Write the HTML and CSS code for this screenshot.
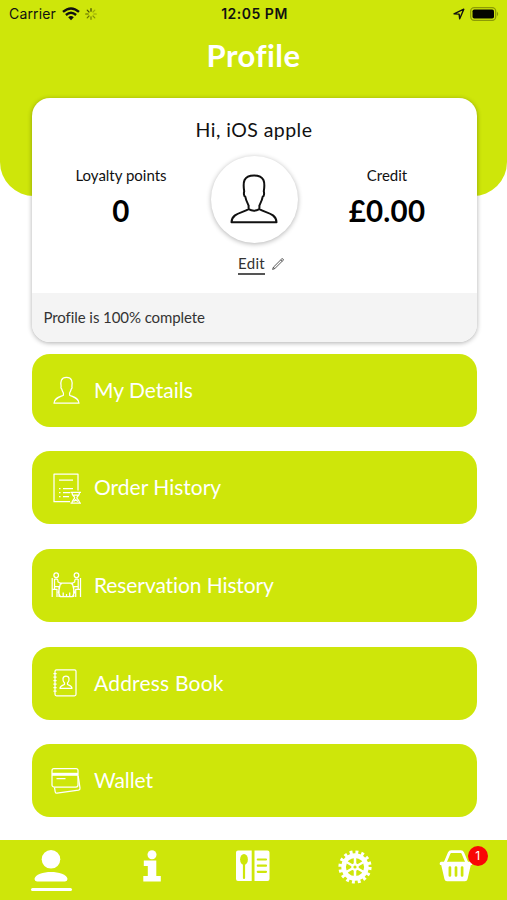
FILE: index.html
```html
<!DOCTYPE html>
<html lang="en">
<head>
<meta charset="utf-8">
<title>Profile</title>
<link rel="stylesheet" href="styles.css">
</head>
<body>
<div class="screen">
  <header class="hero">
    <div class="status">
      <div class="status-left">
        <span class="carrier">Carrier</span>
        <svg class="wifi" width="18" height="14" viewBox="0 0 18 14"><path d="M1 4.9Q9-2 17 4.9M3.9 8Q9 3.6 14.1 8" fill="none" stroke="#111" stroke-width="2.4"/><path d="M6.2 10.2Q9 7.8 11.8 10.2L9 13.3Z" fill="#111"/></svg>
        <svg class="spinner" width="12" height="12" viewBox="0 0 12 12" fill="none" stroke="#3c4300" stroke-width="1.2" stroke-linecap="round"><path d="M6 .7v2.5"/><path d="M9.8 2.2 8 4" opacity=".35"/><path d="M11.3 6H8.8" opacity=".4"/><path d="M9.8 9.8 8 8" opacity=".5"/><path d="M6 11.3V8.8" opacity=".6"/><path d="M2.2 9.8 4 8" opacity=".7"/><path d="M.7 6h2.5" opacity=".8"/><path d="M2.2 2.2 4 4" opacity=".9"/></svg>
      </div>
      <div class="clock">12:05 PM</div>
      <div class="status-right">
        <svg width="12" height="12" viewBox="0 0 12 12"><path d="M1 5.8 10.8 1.2 6.7 10.8 6.1 6.1Z" fill="none" stroke="#111" stroke-width="1.4" stroke-linejoin="round"/></svg>
        <svg width="30" height="14" viewBox="0 0 30 14"><rect x=".7" y=".7" width="25" height="12.6" rx="3.5" fill="none" stroke="#8c9b06" stroke-width="1.3"/><rect x="2.5" y="2.5" width="21.5" height="9" rx="1.8" fill="#050600"/><path d="M27 4.8q2.4 2.2 0 4.4Z" fill="#8c9b06"/></svg>
      </div>
    </div>
    <h1 class="title">Profile</h1>
  </header>

  <main class="content">
    <section class="card">
      <div class="card-main">
        <div class="greeting">Hi, iOS apple</div>
        <div class="stats">
          <div class="stat">
            <div class="label">Loyalty points</div>
            <div class="value">0</div>
          </div>
          <div class="avatar">
            <svg width="48" height="50" viewBox="0 0 48 50" fill="none" stroke="#111" stroke-width="2" stroke-linejoin="round"><path d="M18.6 35.2V31.5C17.3 28.8 15.7 25.7 15.2 22.4C13.8 22.4 13.7 19 14.2 17.4C12.8 8.3 13.3 1.5 24 1.5S35.2 8.3 33.8 17.4C34.3 19 34.2 22.4 32.8 22.4C32.3 25.7 30.7 28.8 29.4 31.5V35.2M18.6 35.2Q24 38.2 29.4 35.2C36 39 46.2 39.2 46.5 48.3H1.5C1.8 39.2 12 39 18.6 35.2Z"/></svg>
          </div>
          <div class="stat">
            <div class="label">Credit</div>
            <div class="value">£0.00</div>
          </div>
        </div>
        <div class="edit">
          <span class="edit-text">Edit</span>
          <svg width="12" height="12" viewBox="0 0 12 12" fill="none" stroke="#444" stroke-width=".9" stroke-linejoin="round"><path d="M.6 11.4 1.4 9.2 9.6 1Q10.5.4 11.1 1T11 2.4L2.8 10.6ZM8.7 1.9 10.1 3.3M1.4 9.2 2.8 10.6"/></svg>
        </div>
      </div>
      <div class="progress">Profile is 100% complete</div>
    </section>

    <nav class="menu">
      <a class="item">
        <svg class="icon" width="32" height="32" viewBox="0 0 32 32"><path d="M13.4 21.2V19C12.7 17.8 12 16.2 11.7 14.8C11 14.6 10.8 13.3 11.1 12.5C10.3 7.8 10.9 3.3 16.5 3.3S22.7 7.8 21.9 12.5C22.2 13.3 22 14.6 21.3 14.8C21 16.2 20.3 17.8 19.6 19V21.2C23.5 23 28.8 24 29 29.2H4C4.2 24 9.5 23 13.4 21.2Z"/></svg>
        <span class="t-details">My Details</span>
      </a>
      <a class="item">
        <svg class="icon" width="32" height="32" viewBox="0 0 32 32"><path d="M20 29.7H4V2.2H28V18.5M9 8H23M9 16.5h1.5M9 20.5h1.5M9 24.5h1.5M13 16.5H23M13 20.5H20M13 24.5H19M20.5 20.3H31M20.5 31.2H31M22 20.5C22 24 24.6 24.2 24.6 25.7S22 28 22 31M29.5 20.5C29.5 24 26.9 24.2 26.9 25.7S29.5 28 29.5 31M23.5 23h4.5M23.5 29.5l2.2-1.8 2.2 1.8"/></svg>
        <span class="t-order">Order History</span>
      </a>
      <a class="item">
        <svg class="icon" width="32" height="32" viewBox="0 0 32 32"><circle cx="6.2" cy="6.2" r="2.3"/><circle cx="26.5" cy="6.2" r="2.3"/><path d="M2.2 9V20.3H7V28M2.2 20V28M4.5 10H7Q8 10 8 13L12 15M4.5 10V20M4.5 17.5H9V28M30.5 9V20.3H25.7V28M30.5 20V28M28.2 10H25.7Q24.7 10 24.7 13L20.7 15M28.2 10V20M28.2 17.5H23.7V28M10.5 14.2H22.3L24.5 23.5L22.5 27.5H10.3L8.4 23.5ZM13.2 27V23.5M19.7 27V23.5M16.5 27V25"/></svg>
        <span class="t-reservation">Reservation History</span>
      </a>
      <a class="item">
        <svg class="icon" width="32" height="32" viewBox="0 0 32 32"><rect x="5" y="2.8" width="21" height="26" rx="1.5"/><path d="M3.4 6.5h3.2M3.4 10h3.2M3.4 13.5h3.2M3.4 17h3.2M3.4 20.5h3.2M3.4 24h3.2"/><path d="M14.5 17.5V16C12.2 13.5 12.2 9 16 9S19.8 13.5 17.5 16V17.5C19.5 18.3 21.8 18.7 22 21.3H10C10.2 18.7 12.5 18.3 14.5 17.5Z"/></svg>
        <span class="t-address">Address Book</span>
      </a>
      <a class="item">
        <svg class="icon" width="32" height="32" viewBox="0 0 32 32"><rect x="2" y="3.5" width="26" height="18.5" rx="2"/><path d="M2 9.3H28" stroke-width="3"/><path d="M6.5 13.5H15.5M4.5 22.5 5.2 26.8Q5.5 28.3 7 28.2L28.5 25.2Q30.2 24.8 30 23L28.2 11"/></svg>
        <span class="t-wallet">Wallet</span>
      </a>
    </nav>
  </main>

  <footer class="tabs">
    <a class="tab active">
      <svg width="40" height="32" viewBox="0 0 40 32" fill="#fff"><circle cx="20" cy="9.3" r="9.3"/><path d="M3.5 29C3.8 24.5 12.5 22 20 22S36.2 24.5 36.5 29Q36.5 31.4 34 31.4H6Q3.5 31.4 3.5 29Z"/></svg>
    </a>
    <a class="tab">
      <svg width="20" height="32" viewBox="0 0 20 32" fill="#fff"><circle cx="10" cy="4.7" r="4.5"/><path d="M1.8 10.5H14.3V26H18.8V31.6H1.3V26H5.8V16H1.8Z"/></svg>
    </a>
    <a class="tab">
      <svg width="36" height="32" viewBox="0 0 36 32"><path d="M3 .5H16.7V31H3Q1 31 1 29V2.5Q1 .5 3 .5ZM19.5.5H32.5Q34.5.5 34.5 2.5V29Q34.5 31 32.5 31H19.5Z" fill="#fff"/><ellipse cx="9" cy="9.4" rx="3.9" ry="5.4" fill="#cee60a"/><path d="M9 13V28M22.8 9.5H31M22.8 15.7H31M22.8 21.8H31" stroke="#cee60a" stroke-width="2.2" stroke-linecap="round"/></svg>
    </a>
    <a class="tab">
      <svg width="34" height="34" viewBox="0 0 34 34" fill="none" stroke="#fff"><circle cx="17" cy="17" r="11.4" stroke-width="4.6"/><circle cx="17" cy="17" r="14.8" stroke-width="3.6" stroke-dasharray="2.9 2.912"/><path d="M17 5V29M6.6 11 27.4 23M6.6 23 27.4 11" stroke-width="2.5"/><circle cx="17" cy="17" r="3.7" fill="#fff" stroke="none"/><circle cx="17" cy="17" r="1.6" fill="#cee60a" stroke="none"/></svg>
    </a>
    <a class="tab">
      <svg width="34" height="32" viewBox="0 0 34 32"><path d="M6 13 10.2 3Q10.8 1.6 12.2 1.6H21.8Q23.2 1.6 23.8 3L28 13" fill="none" stroke="#fff" stroke-width="2.8"/><path d="M2 11.8H32Q34 12.5 33 15H31.8L28.5 29.2Q28 31.2 26 31.2H8Q6 31.2 5.5 29.2L2.2 15H1Q0 12.5 2 11.8Z" fill="#fff"/><path d="M10.9 17.5V25.5M17 17.5V25.5M23.1 17.5V25.5" stroke="#cee60a" stroke-width="2.7" stroke-linecap="round"/></svg>
      <span class="badge">1</span>
    </a>
  </footer>
</div>
</body>
</html>
```

FILE: styles.css
```css
* { box-sizing: border-box; }

body {
  margin: 0;
  background: #fff;
  color: #111;
  font-family: Lato, "Liberation Sans", sans-serif;
  font-variant-ligatures: none;
}

svg { display: block; flex: none; }

.screen {
  width: 507px;
  height: 900px;
  display: flex;
  flex-direction: column;
  overflow: hidden;
}

.hero {
  height: 196px;
  flex: none;
  background: #cee60a;
  border-radius: 0 0 34px 34px;
}

.status {
  height: 27px;
  padding: 0 7px 0 9px;
  display: grid;
  grid-template-columns: 1fr auto 1fr;
  align-items: center;
  font: 14px/27px Inter, sans-serif;
}

.status-left, .status-right {
  display: flex;
  align-items: center;
}

.status-right { justify-content: flex-end; gap: 5px; }
.carrier { letter-spacing: .15px; }
.wifi { margin-left: 6px; }
.spinner { margin-left: 5px; }
.clock { font-weight: 600; letter-spacing: .5px; }

.title {
  margin: 8px 0 0;
  text-align: center;
  color: #fff;
  font-size: 31px;
  line-height: 40px;
  font-weight: 700;
  letter-spacing: .45px;
}

.content {
  flex: 1;
  margin-top: -98px;
  padding: 0 30.5px 0 31.5px;
}

.card {
  height: 243.5px;
  border-radius: 18px;
  overflow: hidden;
  background: #fff;
  box-shadow: 0 1px 5px rgba(0, 0, 0, .32);
}

.card-main {
  height: 194.5px;
  padding-top: 20px;
}

.greeting {
  text-align: center;
  font-size: 19.5px;
  line-height: 24px;
  letter-spacing: .45px;
}

.stats {
  margin-top: 13.5px;
  display: grid;
  grid-template-columns: 179px 87px 179px;
}

.stat { padding-top: 9.5px; text-align: center; }
.label { font-size: 15px; line-height: 20px; }
.value {
  margin-top: 6px;
  font-size: 29.5px;
  line-height: 40px;
  font-weight: 700;
  letter-spacing: .25px;
  color: #000;
}

.avatar {
  height: 87px;
  border-radius: 50%;
  background: #fff;
  box-shadow: 0 1px 5px rgba(0, 0, 0, .3);
  display: flex;
  align-items: center;
  justify-content: center;
}

.edit {
  margin-top: 11.5px;
  padding-left: 14px;
  display: flex;
  justify-content: center;
  gap: 7px;
}

.edit-text {
  height: 21px;
  border-bottom: 2px solid #555;
  font-size: 15px;
  line-height: 19px;
  letter-spacing: .35px;
  color: #333;
}

.edit svg { margin-top: 4px; }

.progress {
  height: 49px;
  padding: 0 12px;
  background: #f4f4f4;
  font-size: 15px;
  line-height: 48px;
  letter-spacing: -.08px;
  color: #333;
}

.menu {
  margin-top: 12px;
  display: flex;
  flex-direction: column;
  gap: 24.7px;
}

.item {
  height: 73px;
  padding-left: 18.5px;
  border-radius: 18px;
  background: #cee60a;
  display: flex;
  align-items: center;
  gap: 12px;
  color: #fff;
  font-size: 21px;
  line-height: 30px;
}

.item span { padding-bottom: 1px; }
.t-reservation { letter-spacing: -.1px; }
.t-address { letter-spacing: .2px; }
.t-wallet { letter-spacing: -.1px; }

.icon {
  fill: none;
  stroke: #fff;
  stroke-width: 1.25;
  stroke-linejoin: round;
}

.tabs {
  height: 60px;
  flex: none;
  background: #cee60a;
  display: grid;
  grid-template-columns: repeat(5, 1fr);
}

.tab {
  position: relative;
  padding-top: 10px;
  display: flex;
  flex-direction: column;
  align-items: center;
}

.active { padding-left: 1px; }

.active::after {
  content: "";
  width: 41px;
  height: 3px;
  margin-top: 5.5px;
  border-radius: 2px;
  background: #fff;
}

.badge {
  position: absolute;
  top: 6px;
  left: 62px;
  width: 20px;
  height: 20px;
  border-radius: 50%;
  background: #f90606;
  color: #fff;
  text-align: center;
  font: 12px/20px Inter, sans-serif;
}
```
